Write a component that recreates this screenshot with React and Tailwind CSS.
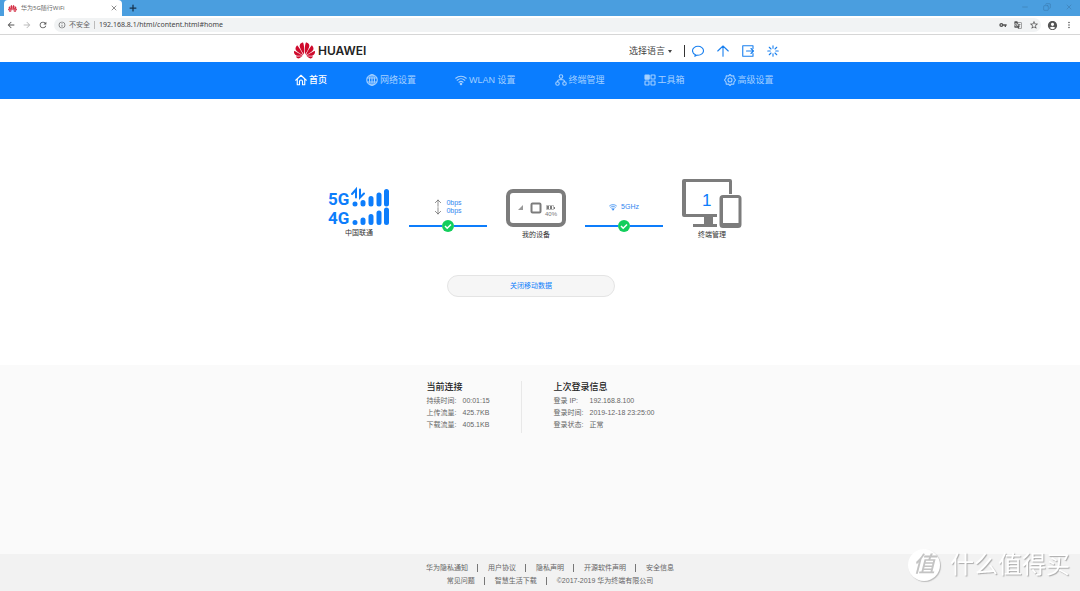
import React from 'react'
import { LuX, LuPlus, LuMinus, LuCopy } from 'react-icons/lu'
import { MdArrowBack, MdArrowForward, MdRefresh, MdInfoOutline, MdVpnKey, MdGTranslate, MdStarBorder, MdAccountCircle, MdMoreVert } from 'react-icons/md'
import { SiHuawei } from 'react-icons/si'

const Icon = ({ children, className = 'h-3 w-3' }) => (
  <svg viewBox="0 0 24 24" fill="none" stroke="currentColor" strokeWidth="2.200" strokeLinecap="round" strokeLinejoin="round" className={`shrink-0 ${className}`} aria-hidden="true">
    {children}
  </svg>
)

const HomeIcon = () => (
  <Icon>
    <path d="M1.500 12.500 12 2.500l10.500 10" />
    <path d="M4.500 10.500V21.500h4.500v-6.500a3 3 0 0 1 6 0v6.500h4.500V10.500" />
  </Icon>
)

const GlobeIcon = () => (
  <Icon>
    <circle cx="12" cy="12" r="10.500" />
    <ellipse cx="12" cy="12" rx="5" ry="10.500" />
    <path d="M12 1.500v21M2.500 8h19M2.500 16h19" />
  </Icon>
)

const WifiIcon = ({ className }) => (
  <Icon className={className}>
    <path d="M1.500 8.500a15.500 15.500 0 0 1 21 0M4.500 12.500a11 11 0 0 1 15 0M8 16.500a6 6 0 0 1 8 0" />
    <circle cx="12" cy="20" r="1.500" fill="currentColor" />
  </Icon>
)

const TerminalsIcon = () => (
  <Icon>
    <circle cx="12" cy="5" r="3.500" />
    <circle cx="5" cy="19" r="3.500" />
    <circle cx="19" cy="19" r="3.500" />
    <path d="M12 8.500v3M5 15.500c0-3 2-4 4-4h6c2 0 4 1 4 4" />
  </Icon>
)

const ToolboxIcon = () => (
  <Icon>
    <rect x="2" y="2" width="8.500" height="8.500" rx="1" fill="currentColor" />
    <rect x="14" y="2" width="8" height="8" rx="1" />
    <rect x="2" y="14" width="8" height="8" rx="1" />
    <rect x="14" y="14" width="8" height="8" rx="1" />
  </Icon>
)

const GearIcon = () => (
  <Icon>
    <path d="M12 1l3 3 4.500-.5.5 4.500 3 4-3 4-.5 4.500-4.500-.5-3 3-3-3-4.500.5L4 16l-3-4 3-4 .5-4.500L9 4z" />
    <circle cx="12" cy="12" r="4" />
  </Icon>
)

const navItems = [
  { label: '首页', icon: HomeIcon, active: true },
  { label: '网络设置', icon: GlobeIcon },
  { label: 'WLAN 设置', icon: WifiIcon },
  { label: '终端管理', icon: TerminalsIcon },
  { label: '工具箱', icon: ToolboxIcon },
  { label: '高级设置', icon: GearIcon }
]

const connectionRows = [
  ['持续时间:', '00:01:15'],
  ['上传流量:', '425.7KB'],
  ['下载流量:', '405.1KB']
]

const loginRows = [
  ['登录 IP:', '192.168.8.100'],
  ['登录时间:', '2019-12-18 23:25:00'],
  ['登录状态:', '正常']
]

const footerLinks = [
  ['华为隐私通知', '用户协议', '隐私声明', '开源软件声明', '安全信息'],
  ['常见问题', '智慧生活下载', '©2017-2019 华为终端有限公司']
]

const BrowserBar = () => (
  <div className="font-['Noto_Sans','Noto_Sans_CJK_SC',sans-serif]">
    <div className="flex h-4 items-stretch bg-[#4a9edf] pl-1">
      <div className="flex w-[118px] items-center rounded-t bg-white pl-1 pr-1 text-[6px] text-[#6b6b6b]">
        <SiHuawei className="mr-1 h-[9px] w-[9px] text-[#d32f45]" />
        <span className="flex-1 whitespace-nowrap">华为5G随行WiFi</span>
        <button type="button" aria-label="关闭标签页" className="text-[#555]"><LuX className="h-2 w-2" /></button>
      </div>
      <button type="button" aria-label="新标签页" className="ml-1.5 text-[#16324c]"><LuPlus className="h-2.5 w-2.5" strokeWidth={3} /></button>
      <div className="ml-auto flex items-center gap-3.5 pr-[7px] pb-0.5 text-[#3c7fb4]">
        <button type="button" aria-label="最小化"><LuMinus className="h-2 w-2" /></button>
        <button type="button" aria-label="还原"><LuCopy className="h-2 w-2 -scale-x-100" /></button>
        <button type="button" aria-label="关闭"><LuX className="h-2 w-2" /></button>
      </div>
    </div>
    <div className="flex h-[19px] items-center border-b border-[#d6d6d6] bg-white px-1.5 text-[#555]">
      <button type="button" aria-label="后退"><MdArrowBack className="h-2.5 w-2.5" /></button>
      <button type="button" aria-label="前进" className="ml-1.5 text-[#bbb]"><MdArrowForward className="h-2.5 w-2.5" /></button>
      <button type="button" aria-label="刷新" className="ml-1.5"><MdRefresh className="h-2.5 w-2.5" /></button>
      <div className="ml-1.5 flex h-3.5 flex-1 items-center rounded-full bg-[#f1f3f4] pl-1 pr-0.5 text-[7px]">
        <MdInfoOutline className="h-2 w-2" />
        <label htmlFor="url" className="ml-[3px] whitespace-nowrap text-[#666]">不安全</label>
        <span className="mx-1 h-2 w-px bg-[#bbb]" />
        <input id="url" type="text" defaultValue="192.168.8.1/html/content.html#home" className="min-w-0 flex-1 bg-transparent text-[#444] outline-none" />
        <div className="flex items-center gap-[7px]">
          <MdVpnKey className="h-2 w-2" />
          <MdGTranslate className="h-2 w-2" />
          <MdStarBorder className="h-2.5 w-2.5" />
        </div>
      </div>
      <button type="button" aria-label="用户" className="ml-1.5"><MdAccountCircle className="h-[11px] w-[11px]" /></button>
      <button type="button" aria-label="更多" className="ml-1.5"><MdMoreVert className="h-2.5 w-2.5" /></button>
    </div>
  </div>
)

const Header = () => (
  <header>
    <div className="mx-auto flex h-[27px] w-full max-w-[492px] items-center pr-[7px] pt-1">
      <a href="#home" className="flex items-center gap-[3px] text-[#222]">
        <SiHuawei className="h-[21px] w-[21px] text-[#cf0a2c]" />
        <span className="font-['Inter',sans-serif] text-[12px] font-semibold leading-4">HUAWEI</span>
      </a>
      <div className="ml-auto flex items-center">
        <label className="flex items-center pt-0.5 text-[9px] text-[#444]">
          <select aria-label="选择语言" className="appearance-none bg-transparent outline-none">
            <option>选择语言</option>
          </select>
          <svg viewBox="0 0 4 3" className="ml-0.5 h-[3px] w-1" fill="currentColor"><path d="M0 0h4L2 3z" /></svg>
        </label>
        <span className="ml-3 mr-[7px] h-3 w-px bg-[#333]" />
        <div className="flex items-center gap-[13px] text-[#1a80ef]">
          <button type="button" aria-label="短信">
            <Icon><path d="M7 19.500C3.500 18 1 15 1 11.500 1 6.500 6 2.500 12 2.500s11 4 11 9-5 9-11 9c-1 0-2-.1-2.500-.2L5.500 22.500z" /></Icon>
          </button>
          <button type="button" aria-label="更新">
            <Icon><path d="M12 22.500V2M1.500 12 12 2l10.500 10" /></Icon>
          </button>
          <button type="button" aria-label="退出">
            <Icon><path d="M22 7V1.500H1.500v21H22V17M9 12h14M18 7l5 5-5 5" /></Icon>
          </button>
          <button type="button" aria-label="状态">
            <Icon><path d="M12 1.500v5M12 17.500v5M1.500 12h5M17.500 12h5M4.500 4.500 8 8M16 16l3.500 3.500M4.500 19.500 8 16M16 8l3.500-3.500" /></Icon>
          </button>
        </div>
      </div>
    </div>
    <nav className="bg-[#0a7dff]">
      <ul className="mx-auto flex h-[37px] w-full max-w-[492px] items-center gap-[39px] pb-0.5 pl-px">
        {navItems.map(({ label, icon: NavIcon, active }) => (
          <li key={label}>
            <a href="#home" className={`flex items-center gap-0.5 whitespace-nowrap text-[9px] leading-3 ${active ? 'font-medium text-white' : 'text-[#a4d0ff]'}`}>
              <NavIcon />
              {label}
            </a>
          </li>
        ))}
      </ul>
    </nav>
  </header>
)

const SignalGraphic = () => (
  <svg viewBox="0 0 62 38" className="h-[38px] w-[62px] overflow-visible" fill="#0d7dfb" stroke="#0d7dfb" strokeLinecap="round">
    <g stroke="none" fontFamily="Roboto,sans-serif" fontWeight="bold" fontSize="17">
      <text x="0" y="17">5G</text>
      <text x="0" y="36">4G</text>
    </g>
    <g strokeWidth="5">
      <path d="M27 16v.1M35 14.500V16M43 10.500V16M51 7v9M58.500 3.500V16" />
      <path d="M27 34.500v.1M35 32v2.500M43 28.500v6M51 25v9.500M58.500 22v12.500" />
    </g>
    <path d="M24 6 28 1.500v8M32 1.500v8L36 5.500" fill="none" strokeWidth="2" />
  </svg>
)

const DeviceGraphic = () => (
  <svg viewBox="0 0 60 39" className="h-[39px] w-[60px]" fill="none" stroke="#7c7c7c">
    <rect x="2" y="2" width="56" height="34" rx="5" strokeWidth="4" />
    <rect x="25.500" y="14.500" width="9" height="9" rx="1" strokeWidth="2" />
    <path d="M12 21h5v-5z" fill="#999" stroke="none" />
    <g fill="#7c7c7c" stroke="none">
      <rect x="41" y="17" width="2" height="3" />
      <rect x="44" y="17" width="2" height="3" />
      <rect x="48" y="18" width="1" height="2" />
    </g>
    <path d="M40.500 16.500h7v4h-7z" strokeWidth="0.500" />
    <text x="39" y="27" fill="#777" stroke="none" fontSize="6">40%</text>
  </svg>
)

const TerminalsGraphic = () => (
  <svg viewBox="0 0 60 50" className="h-[50px] w-[60px]" fill="#7c7c7c">
    <path d="M2 1h46a2 2 0 0 1 2 2v13h-3V4H4v32h31v3H2a2 2 0 0 1-2-2V3a2 2 0 0 1 2-2z" />
    <path d="M22 39h9v7h4v3H11v-3h11z" />
    <path fillRule="evenodd" d="M41 17h15a3.500 3.500 0 0 1 3.500 3.500v26A3.500 3.500 0 0 1 56 50H41a3.500 3.500 0 0 1-3.500-3.500v-26A3.500 3.500 0 0 1 41 17zm0 3v25h15.500V20z" />
    <text x="20" y="28" fill="#0d7dfb" fontSize="17">1</text>
  </svg>
)

const Link = ({ children }) => (
  <div className="flex w-[78px] flex-col items-center pb-2 text-[7px] leading-2 text-[#2f86f0]">
    {children}
    <div className="mt-1 flex w-full items-center">
      <span className="h-0.5 flex-1 bg-[#0d7dfb]" />
      <svg viewBox="0 0 12 12" className="h-3 w-3" fill="none">
        <circle cx="6" cy="6" r="6" fill="#12ce5c" />
        <path d="M3 6l2.200 2.200L9 4.500" stroke="#fff" strokeWidth="1.500" />
      </svg>
      <span className="h-0.5 flex-1 bg-[#0d7dfb]" />
    </div>
  </div>
)

const InfoList = ({ title, rows }) => (
  <div>
    <h2 className="mb-0.5 text-[9px] font-medium leading-3 text-[#222]">{title}</h2>
    {rows.map(([label, value]) => (
      <div key={label} className="flex text-[7px] leading-[12px] text-[#666]">
        <span className="w-9 shrink-0 whitespace-nowrap">{label}</span>
        <span className="whitespace-nowrap">{value}</span>
      </div>
    ))}
  </div>
)

const App = () => {
  return (
    <div className="flex min-h-screen flex-col bg-white font-['Liberation_Sans','Noto_Sans_CJK_SC',sans-serif] text-[#333]">
      <BrowserBar />
      <Header />

      <main className="flex flex-1 flex-col">
        <section className="mx-auto w-full max-w-[492px] pb-[68px] pt-[79px]">
          <div className="flex items-end justify-center gap-[19px] pr-2.5 text-[7px] leading-[10px]">
            <div className="flex flex-col items-center gap-0.5 pb-0.5">
              <SignalGraphic />
              <span>中国联通</span>
            </div>
            <Link>
              <div className="flex items-center gap-1">
                <Icon className="h-2 w-2 text-[#666]"><path d="M12 22V3M4 11l8-8 8 8" /></Icon>
                <span>0bps</span>
              </div>
              <div className="flex items-center gap-1 pb-px">
                <Icon className="h-2 w-2 text-[#666]"><path d="M12 2v19M4 13l8 8 8-8" /></Icon>
                <span>0bps</span>
              </div>
            </Link>
            <div className="flex flex-col items-center gap-0.5">
              <DeviceGraphic />
              <span>我的设备</span>
            </div>
            <Link>
              <div className="flex items-center gap-1 pb-[5px]">
                <WifiIcon className="h-2 w-2" />
                <span>5GHz</span>
              </div>
            </Link>
            <div className="flex flex-col items-center gap-0.5">
              <TerminalsGraphic />
              <span>终端管理</span>
            </div>
          </div>
          <div className="mt-[35px] flex justify-center pr-[18px]">
            <button type="button" className="h-[22px] w-[168px] rounded-full border border-[#e4e4e4] bg-[#f6f6f6] text-[7px] text-[#0d7dfb]">
              关闭移动数据
            </button>
          </div>
        </section>

        <section className="flex flex-1 items-start justify-center bg-[#fafafa] pl-px pt-4">
          <div className="w-[95px] border-r border-[#e8e8e8] pb-0.5">
            <InfoList title="当前连接" rows={connectionRows} />
          </div>
          <div className="pl-8">
            <InfoList title="上次登录信息" rows={loginRows} />
          </div>
        </section>
      </main>

      <footer className="bg-[#f2f2f2] pb-1 pl-5 pt-[7px] text-[7px] leading-[13px] text-[#666]">
        {footerLinks.map((links) => (
          <div key={links[0]} className="flex items-center justify-center">
            {links.map((link, index) => (
              <React.Fragment key={link}>
                {index > 0 && <span className="ml-[9px] mr-2.5 h-2 w-px bg-[#777]" />}
                <a href="#home">{link}</a>
              </React.Fragment>
            ))}
          </div>
        ))}
      </footer>

      <div className="pointer-events-none fixed bottom-2.5 right-2.5 flex items-center gap-2.5 text-white">
        <span className="flex h-8 w-8 items-center justify-center rounded-full bg-white text-[22px] font-medium italic leading-8 text-[#c4c4c4] shadow-[1px_1px_1px_#bbb]">值</span>
        <span className="text-[24px] leading-8 [text-shadow:1px_1px_1px_#aaa]">什么值得买</span>
      </div>
    </div>
  )
}

export default App
